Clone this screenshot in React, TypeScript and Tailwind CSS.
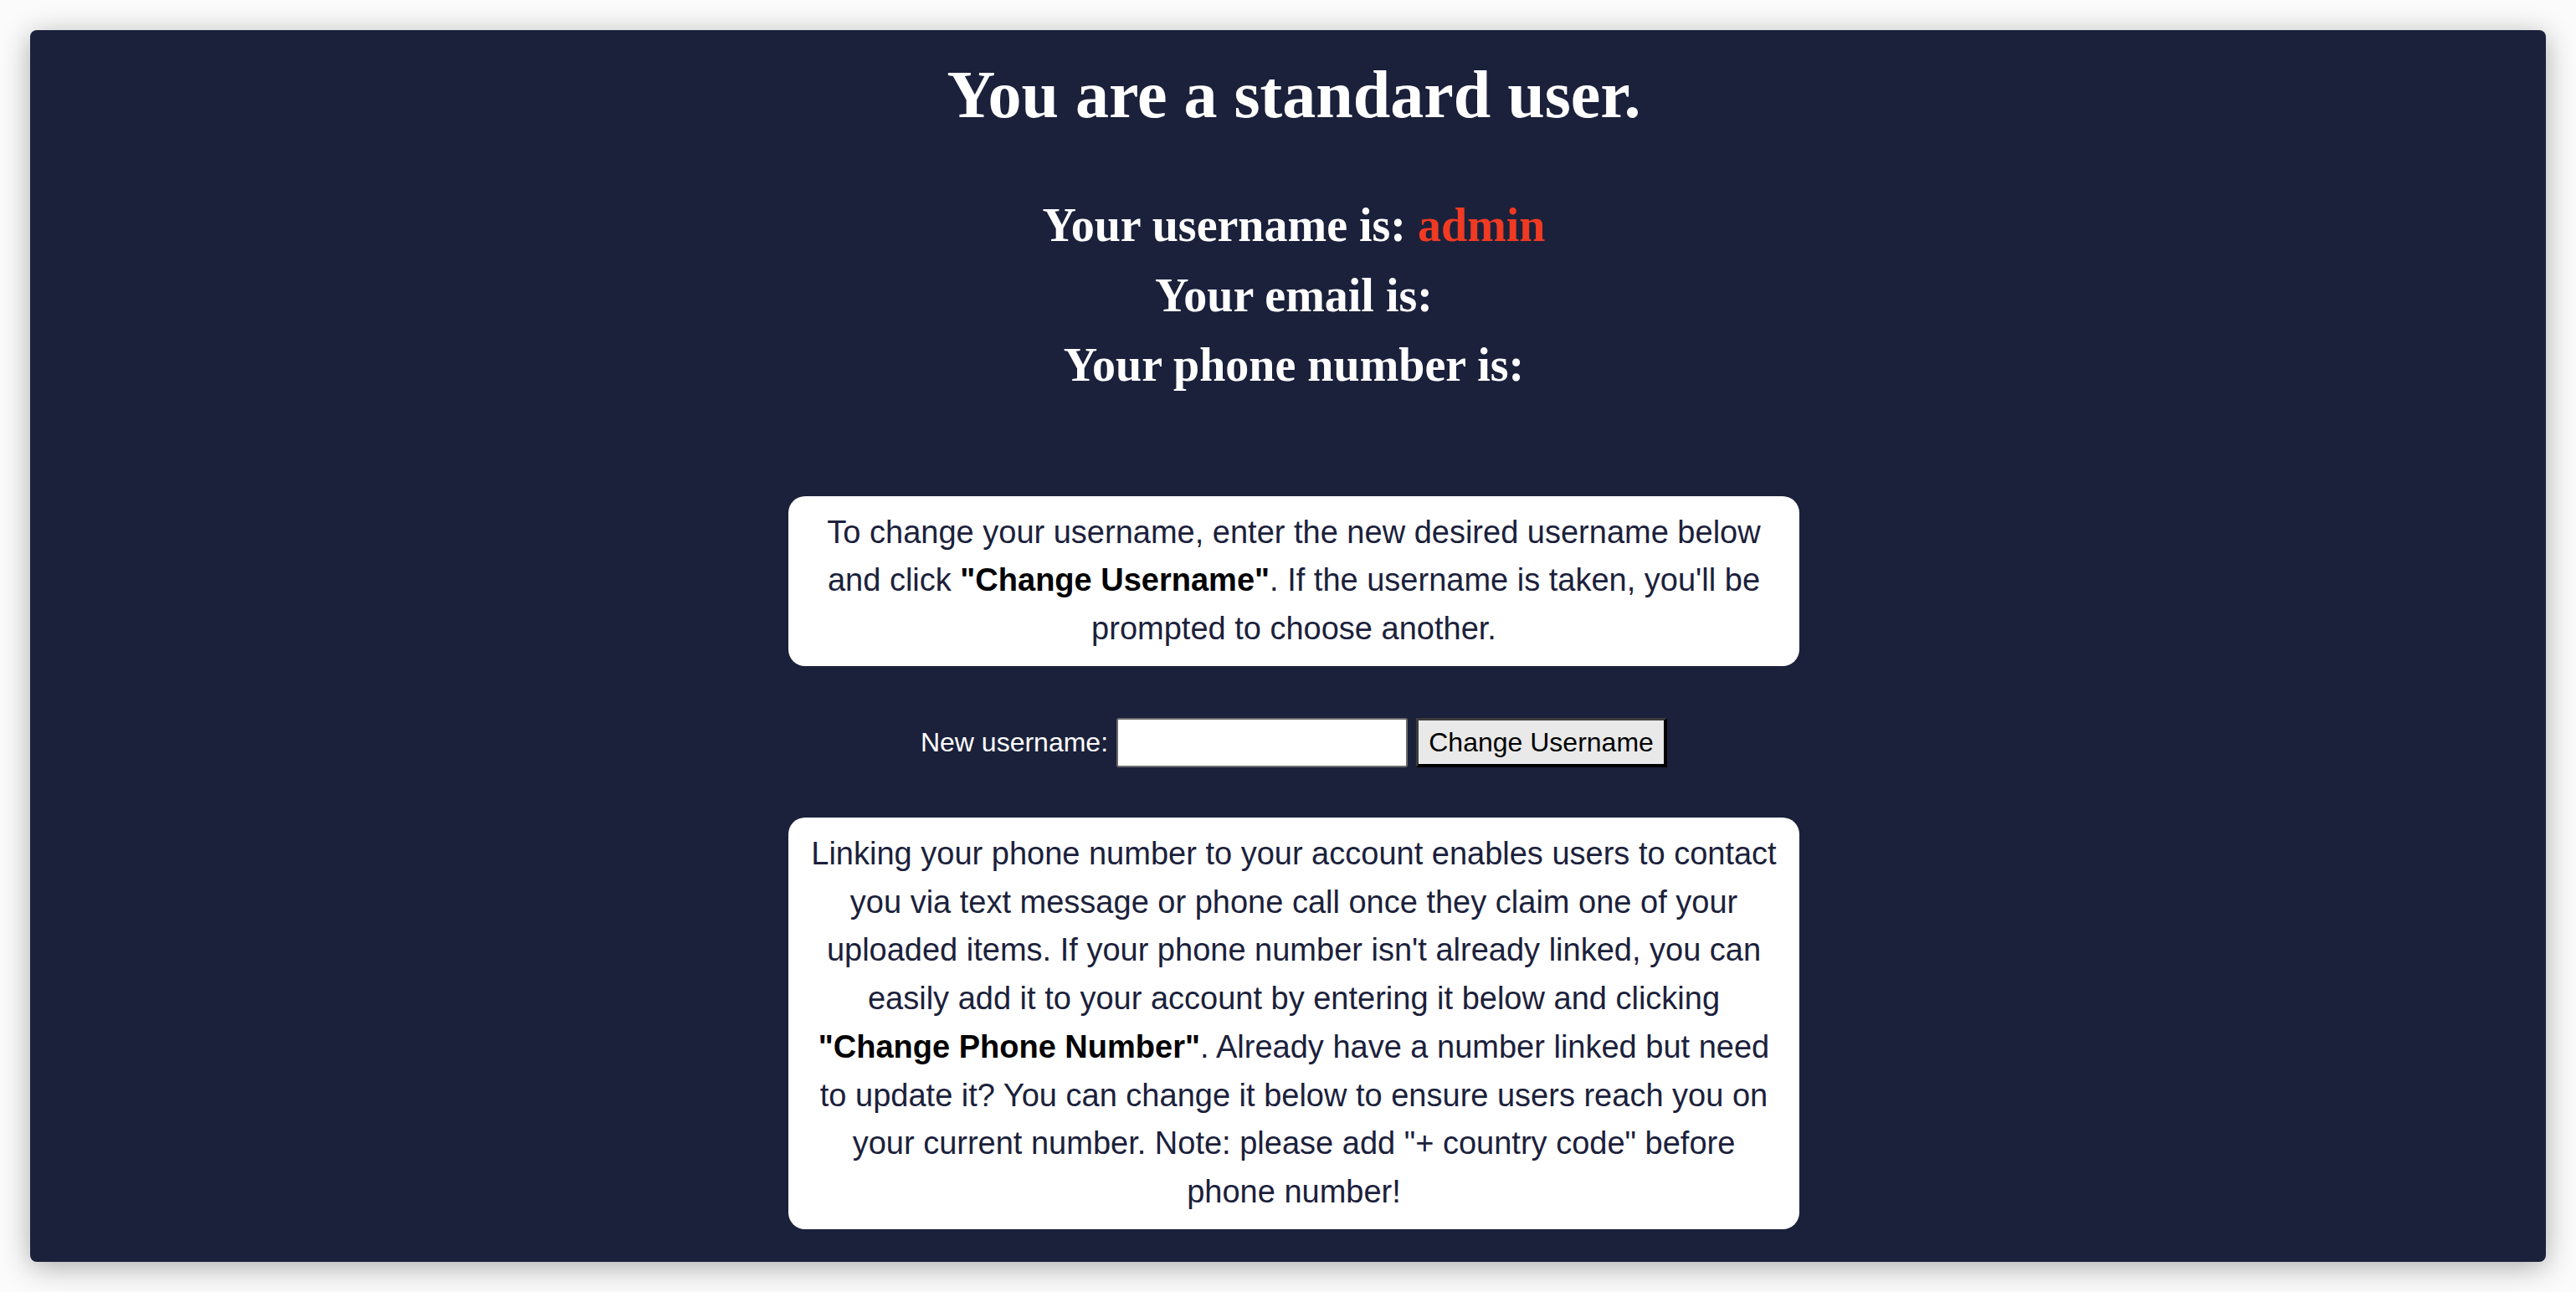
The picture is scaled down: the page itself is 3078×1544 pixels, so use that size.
export default function App() {
  return (
    <div className="h-[1544px] w-full bg-[#fbfbfb] p-[36px]">
      <div className="h-full overflow-hidden rounded-[8px] bg-[#1b213b] shadow-[0_6px_34px_rgba(0,0,0,0.32)]">
        <div className="flex flex-col items-center pl-[14px] pt-[37px]">
          <h1 className="font-['Liberation_Serif',serif] text-[80px] leading-none font-bold text-white">
            You are a standard user.
          </h1>

          <div className="mt-[75px] flex flex-col items-center font-['Liberation_Serif',serif] text-[56px] leading-[83.5px] font-bold text-white">
            <p>
              Your username is: <span className="text-[#f03a22]">admin</span>
            </p>
            <p>Your email is:</p>
            <p>Your phone number is:</p>
          </div>

          <div className="mt-[114px] w-[1208px] rounded-[20px] bg-white px-6 py-[15px] text-center font-['Liberation_Sans',Arial,sans-serif] text-[38px] leading-[1.52] text-[#1b213b]">
            To change your username, enter the new desired username below and click{" "}
            <b className="text-black">"Change Username"</b>. If the username is taken, you'll be prompted to choose
            another.
          </div>

          <div className="mt-[62px] flex items-center gap-[10px] font-['Liberation_Sans',Arial,sans-serif] text-[32px]">
            <label htmlFor="new-username" className="text-white">
              New username:
            </label>
            <input
              id="new-username"
              type="text"
              className="h-[59px] w-[348px] rounded-[3px] border-2 border-[#6b6b6b] bg-white"
            />
            <button
              type="button"
              className="h-[59px] w-[300px] border-t-[3px] border-r-[4px] border-b-[4px] border-l-[3px] border-t-[#3c3c3c] border-r-black border-b-black border-l-[#3c3c3c] bg-[#e9e9e9] text-black"
            >
              Change Username
            </button>
          </div>

          <div className="mt-[60px] w-[1208px] rounded-[20px] bg-white px-6 py-[15px] text-center font-['Liberation_Sans',Arial,sans-serif] text-[38px] leading-[1.52] text-[#1b213b]">
            Linking your phone number to your account enables users to contact you via text message or phone call
            once they claim one of your uploaded items. If your phone number isn't already linked, you can easily add
            it to your account by entering it below and clicking <b className="text-black">"Change Phone Number"</b>.
            Already have a number linked but need to update it? You can change it below to ensure users reach you on
            your current number. Note: please add "+ country code" before phone number!
          </div>
        </div>
      </div>
    </div>
  );
}
